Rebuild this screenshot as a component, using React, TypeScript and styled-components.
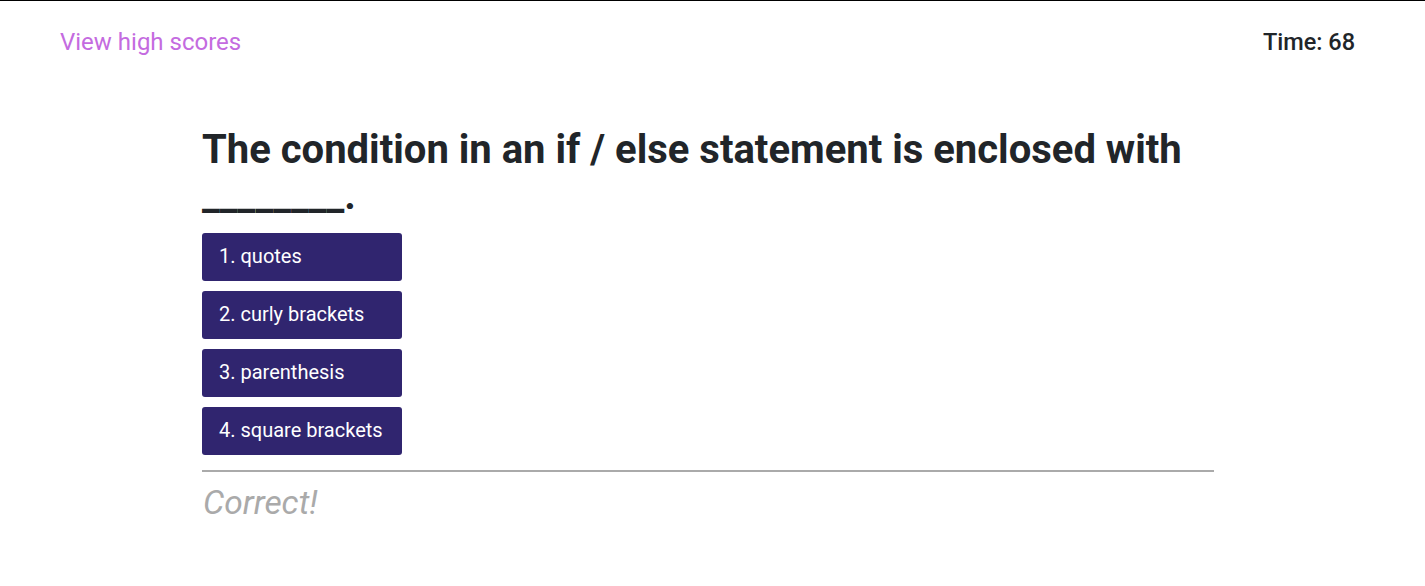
import React from 'react';
import styled, { createGlobalStyle } from 'styled-components';

const GlobalStyle = createGlobalStyle`
  html, body {
    margin: 0;
    padding: 0;
    background: #fff;
    font-family: Roboto, "Liberation Sans", Arial, sans-serif;
    color: #212529;
  }
`;

const answers = ['quotes', 'curly brackets', 'parenthesis', 'square brackets'];

export default function App(): JSX.Element {
  return (
    <>
      <GlobalStyle />
      <Page>
        <Header>
          <HighScores href="#">View high scores</HighScores>
          <Timer>Time: 68</Timer>
        </Header>

        <Quiz>
          <Question>The condition in an if / else statement is enclosed with ________.</Question>
          <Answers>
            {answers.map((answer, index) => (
              <Answer key={answer}>
                {index + 1}. {answer}
              </Answer>
            ))}
          </Answers>
          <Divider />
          <Feedback>Correct!</Feedback>
        </Quiz>
      </Page>
    </>
  );
}

const Page = styled.div`
  border-top: 1px solid #000;
  min-height: 585px;
`;

const Header = styled.header`
  display: flex;
  justify-content: space-between;
  align-items: center;
  padding: 26px 70px 0 60px;
  height: 30px;
`;

const HighScores = styled.a`
  color: #c46be0;
  font-size: 24px;
  text-decoration: none;
`;

const Timer = styled.div`
  font-size: 23.5px;
  font-weight: 500;
  color: #212529;
`;

const Quiz = styled.main`
  width: 1012px;
  margin: 70px 0 0 202px;
`;

const Question = styled.h1`
  margin: 0 0 14px;
  font-size: 40px;
  font-weight: 700;
  line-height: 46px;
  color: #212529;
  padding-right: 20px;
`;

const Answers = styled.div`
  display: flex;
  flex-direction: column;
  gap: 10px;
`;

const Answer = styled.button`
  width: 200px;
  height: 48px;
  border: none;
  border-radius: 3px;
  background: #30256f;
  color: #fff;
  font-family: Roboto, "Liberation Sans", Arial, sans-serif;
  font-size: 20px;
  text-align: left;
  padding: 0 0 2px 17px;
  cursor: pointer;
`;

const Divider = styled.hr`
  margin: 15px 0 0;
  border: none;
  border-top: 2px solid #aaa;
`;

const Feedback = styled.p`
  margin: 11px 0 0 1px;
  font-size: 33.5px;
  font-style: italic;
  color: #aaa;
`;
